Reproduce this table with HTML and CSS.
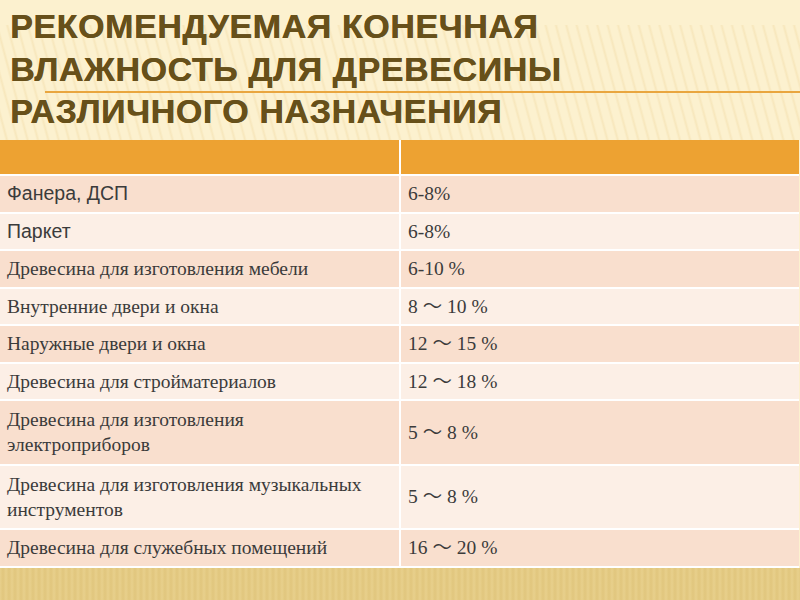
FILE: index.html
```html
<!DOCTYPE html>
<html lang="ru">
<head>
<meta charset="utf-8">
<title>Влажность древесины</title>
<link rel="stylesheet" href="styles.css">
</head>
<body>
<div class="slide">
  <header class="head">
    <h1 class="title">Рекомендуемая конечная влажность для древесины различного назначения</h1>
  </header>
  <table class="grid">
    <thead>
      <tr class="hdr"><th></th><th></th></tr>
    </thead>
    <tbody>
      <tr class="odd"><td class="sans">Фанера, ДСП</td><td>6-8%</td></tr>
      <tr class="even"><td class="sans">Паркет</td><td>6-8%</td></tr>
      <tr class="odd"><td>Древесина для изготовления мебели</td><td>6-10 %</td></tr>
      <tr class="even"><td>Внутренние двери и окна</td><td>8 ～ 10 %</td></tr>
      <tr class="odd"><td>Наружные двери и окна</td><td>12 ～ 15 %</td></tr>
      <tr class="even"><td>Древесина для стройматериалов</td><td>12 ～ 18 %</td></tr>
      <tr class="odd tall"><td>Древесина для изготовления<br>электроприборов</td><td>5 ～ 8 %</td></tr>
      <tr class="even tall"><td>Древесина для изготовления музыкальных<br>инструментов</td><td>5 ～ 8 %</td></tr>
      <tr class="odd"><td>Древесина для служебных помещений</td><td>16 ～ 20 %</td></tr>
    </tbody>
  </table>
  <div class="foot"></div>
</div>
</body>
</html>
```
FILE: styles.css
```css
html, body {
  margin: 0;
  padding: 0;
}
body {
  width: 800px;
  height: 600px;
  overflow: hidden;
  background: #fcf1cf;
}
.slide {
  width: 800px;
  height: 600px;
  display: flex;
  flex-direction: column;
  background:
    repeating-linear-gradient(75deg, rgba(235, 205, 140, 0) 0px, rgba(235, 205, 140, 0) 6px, rgba(235, 205, 140, 0.28) 8px, rgba(235, 205, 140, 0) 10px),
    #fcf1cf;
  background-size: 800px 120px, auto;
  background-position: 0 25px, 0 0;
  background-repeat: no-repeat;
}
.head {
  position: relative;
  height: 140px;
  box-sizing: border-box;
  padding: 5px 0 0 10px;
}
.head::after {
  content: "";
  position: absolute;
  left: 45px;
  right: 0;
  top: 91px;
  height: 2px;
  background: #e9a63f;
}
.title {
  position: relative;
  z-index: 1;
  margin: 0;
  font-family: "Liberation Sans", Arial, sans-serif;
  font-weight: bold;
  font-size: 34px;
  line-height: 42.5px;
  letter-spacing: 0.6px;
  text-transform: uppercase;
  color: #67501a;
  text-shadow: 0.4px 0 0 #67501a;
  width: 620px;
}
.grid {
  width: 799px;
  border-collapse: collapse;
  table-layout: fixed;
  font-family: "Liberation Serif", "Times New Roman", "Noto Sans CJK JP", serif;
  font-size: 19.5px;
  color: #3b3b3b;
}
.grid th, .grid td {
  border: 2px solid #ffffff;
  border-top: 0;
  padding: 0 0 0 7px;
  text-align: left;
  font-weight: normal;
  vertical-align: middle;
  line-height: 25px;
  white-space: nowrap;
}
.grid th:first-child, .grid td:first-child {
  border-left: 0;
  width: 392px;
}
.grid th:last-child, .grid td:last-child {
  border-right: 0;
}
.hdr th {
  background: #eda232;
  height: 34px;
}
.grid td {
  height: 35.5px;
}
.grid .tall td {
  height: 62.5px;
}
.odd td { background: #f9dfce; }
.even td { background: #fcefe6; }
.sans {
  font-family: "Liberation Sans", Arial, sans-serif;
  font-size: 19.5px;
}
.foot {
  flex: 1;
  background:
    repeating-linear-gradient(90deg, rgba(200, 165, 80, 0) 0px, rgba(200, 165, 80, 0.25) 3px, rgba(200, 165, 80, 0) 6px),
    #e8d08c;
}
```
